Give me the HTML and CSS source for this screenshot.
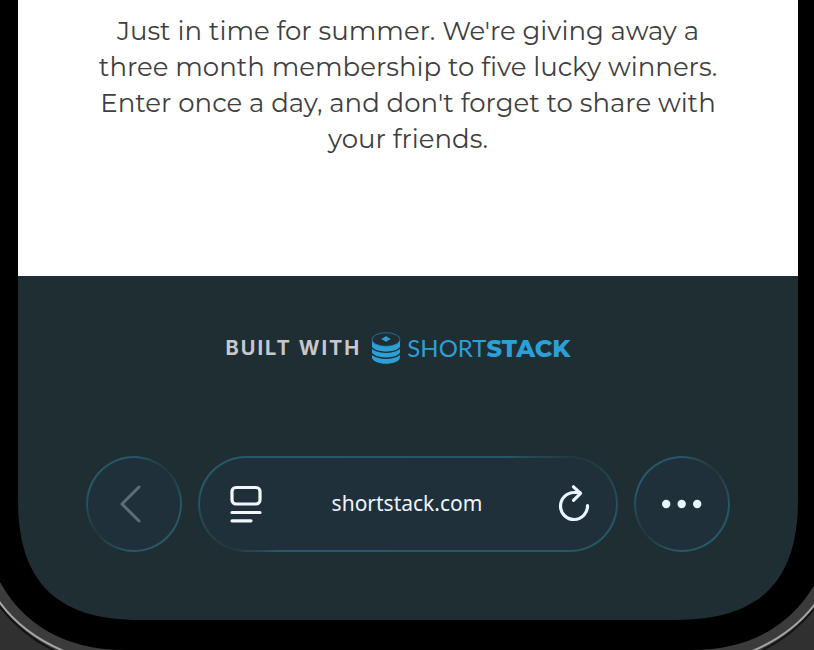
FILE: index.html
```html
<!DOCTYPE html>
<html lang="en">
<head>
<meta charset="utf-8">
<meta name="viewport" content="width=device-width, initial-scale=1">
<title>Membership giveaway</title>
<link rel="stylesheet" href="styles.css">
</head>
<body>
<div class="device">
  <div class="screen">
    <main class="intro">
      <p>Just in time for summer. We're giving away a three month membership to five lucky winners. Enter once a day, and don't forget to share with your friends.</p>
    </main>
    <footer class="footer">
      <a class="credit" href="#">
        <span class="built">BUILT WITH</span>
        <span class="brand">
          <svg class="stack" width="30" height="32" viewBox="0 0 30 32" aria-hidden="true">
            <path fill="#2b9fd8" d="M1 7v18c0 9 28 9 28 0V7z"/>
            <path fill="none" stroke="#1f2e33" stroke-width="1.500" d="M0 14c2 8.200 28 8.200 30 0M0 20c2 8.200 28 8.200 30 0"/>
            <ellipse cx="15" cy="7.500" rx="14" ry="6.800" fill="#1f2e33" stroke="#2884b0" stroke-width=".7"/>
            <path fill="#2b9fd8" d="M1 9c2 8 26 8 28 0v5c-2 7-26 7-28 0zM15 4l2 1.500 3 1.500-3 1.500-2 1.500-2-1.500-3-1.500 3-1.500z"/>
          </svg>
          <span class="wordmark">SHORT<b>STACK</b></span>
        </span>
      </a>
      <nav class="toolbar" aria-label="Browser">
        <button class="glass round" type="button" aria-label="Back">
          <svg width="24" height="40" viewBox="0 0 24 40"><path d="M20 3 3 20l17 17" fill="none" stroke="#5b6d78" stroke-width="3" stroke-linecap="round" stroke-linejoin="round"/></svg>
        </button>
        <div class="glass address">
          <button class="tool" type="button" aria-label="Page menu">
            <svg width="32" height="38" viewBox="0 0 32 38" fill="none" stroke="#f2f7ff" stroke-width="3.200" stroke-linecap="round"><rect x="2" y="2.500" width="28" height="16.500" rx="4"/><path d="M2 27.500h28M2 35.800h19"/></svg>
          </button>
          <input type="text" value="shortstack.com" aria-label="Address">
          <button class="tool" type="button" aria-label="Reload">
            <svg width="32" height="38" viewBox="0 0 32 38" fill="none" stroke="#e9f5ff" stroke-width="3.200" stroke-linecap="round" stroke-linejoin="round"><path d="M29.500 20.500A13.500 13.500 0 1 1 16 7.500H22"/><path d="m15.500 1.800 7 6.500-7 7"/></svg>
          </button>
        </div>
        <button class="glass round" type="button" aria-label="More">
          <svg width="40" height="10" viewBox="0 0 40 10" fill="#e9f5ff"><circle cx="4.200" cy="5" r="4.200"/><circle cx="19.700" cy="5" r="4.200"/><circle cx="35.200" cy="5" r="4.200"/></svg>
        </button>
      </nav>
    </footer>
  </div>
  <svg class="corner" width="150" height="155" viewBox="0 495 150 155" aria-hidden="true">
    <path d="M0 495h18v5C18 585 60 620 140 620h10v30H0z"/>
    <path fill="#3b3b3c" d="M0 582C22 622 62 650 125 650H0z"/>
    <path fill="#303031" stroke="#111" stroke-width="2" d="M-2 604Q24 638 62 654H-2z"/>
    <path fill="none" stroke="#a3a3a5" stroke-width="2" d="M-2 600Q22 634 66 652"/>
  </svg>
  <svg class="corner right" width="150" height="155" viewBox="0 495 150 155" aria-hidden="true">
    <path d="M0 495h18v5C18 585 60 620 140 620h10v30H0z"/>
    <path fill="#3b3b3c" d="M0 582C22 622 62 650 125 650H0z"/>
    <path fill="#303031" stroke="#111" stroke-width="2" d="M-2 604Q24 638 62 654H-2z"/>
    <path fill="none" stroke="#a3a3a5" stroke-width="2" d="M-2 600Q22 634 66 652"/>
  </svg>
</div>
</body>
</html>
```
FILE: styles.css
```css
* { box-sizing: border-box; }
body { margin: 0; background: #000; }
.device {
  position: relative;
  overflow: hidden;
  padding: 0 16px 30px 18px;
  background: #000;
}
.intro {
  padding: 13px 72px 119px;
  background: #fff;
  color: #3f3f3f;
  font: 400 26px/36px Montserrat, Inter, sans-serif;
  text-align: center;
}
.intro p { margin: 0; }
.footer {
  padding: 52px 68px 68px;
  background: #1f2e33;
}
.credit {
  display: flex;
  align-items: center;
  justify-content: center;
  gap: 10px;
  height: 40px;
  padding-right: 20px;
  color: #c6c8ce;
  text-decoration: none;
}
.built { font: 700 20px/24px Inter, sans-serif; letter-spacing: 2px; }
.brand { display: flex; align-items: center; gap: 6px; color: #2b9fd8; }
.wordmark { font: 400 24px/32px Lato, sans-serif; }
.wordmark b { font-family: Montserrat, Lato, sans-serif; font-weight: 800; }
.toolbar {
  display: flex;
  gap: 16px;
  margin-top: 88px;
}
.glass {
  border: 2px solid transparent;
  border-radius: 48px;
  background:
    linear-gradient(#1f303a, #1f303a) padding-box,
    conic-gradient(#265766, #22373f 45deg, #265766 90deg, #265a6a 150deg, #265766 190deg, #22373f 230deg, #265a6a 290deg, #265766) border-box;
}
.address.glass {
  background:
    linear-gradient(#1f303a, #1f303a) padding-box,
    conic-gradient(#265766 65deg, #22373f 75deg, #265766 95deg, #265a6a 250deg, #22373f 256deg, #265a6a 275deg, #265766) border-box;
}
.round {
  display: grid;
  place-items: center;
  flex: none;
  width: 96px;
  height: 96px;
  padding: 0;
}
.round[aria-label="Back"] { padding-right: 6px; }
.address {
  display: flex;
  align-items: center;
  flex: 1;
  min-width: 0;
  height: 96px;
  padding: 0 26px 0 30px;
}
.tool {
  display: grid;
  place-items: center;
  flex: none;
  padding: 0;
  border: 0;
  background: none;
}
.address input {
  flex: 1;
  min-width: 0;
  padding: 0 6px 2px 0;
  border: 0;
  outline: 0;
  background: none;
  color: #edf4fa;
  font: 400 21px/32px "Noto Sans", sans-serif;
  text-align: center;
}
.corner { position: absolute; left: 0; bottom: 0; }
.corner.right { left: auto; right: -2px; transform: scaleX(-1); }
```
